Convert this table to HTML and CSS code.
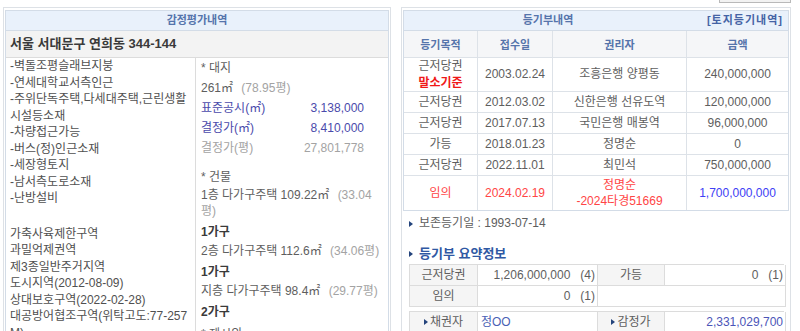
FILE: index.html
```html
<!DOCTYPE html>
<html lang="ko">
<head>
<meta charset="utf-8">
<title>감정평가 / 등기부</title>
<link rel="stylesheet" href="styles.css">
</head>
<body>
<div class="topbar"><div class="btn-sliver"></div></div>
<div class="page">
  <section class="panel panel-left">
    <div class="box">
      <div class="box-head">감정평가내역</div>
      <div class="addr">서울 서대문구 연희동 344-144</div>
      <div class="appr">
        <div class="appr-notes">
          <div class="notes">
            <p>-벽돌조평슬래브지붕</p>
            <p>-연세대학교서측인근</p>
            <p>-주위단독주택,다세대주택,근린생활시설등소재</p>
            <p>-차량접근가능</p>
            <p>-버스(정)인근소재</p>
            <p>-세장형토지</p>
            <p>-남서측도로소재</p>
            <p>-난방설비</p>
          </div>
          <div class="notes notes-zone">
            <p>가축사육제한구역</p>
            <p>과밀억제권역</p>
            <p>제3종일반주거지역</p>
            <p>도시지역(2012-08-09)</p>
            <p>상대보호구역(2022-02-28)</p>
            <p>대공방어협조구역(위탁고도:77-257M)</p>
          </div>
        </div>
        <div class="appr-detail">
          <div class="d-head">* 대지</div>
          <div class="d-line">261㎡ <span class="muted">(78.95평)</span></div>
          <div class="kv kv-blue"><span>표준공시(㎡)</span><span>3,138,000</span></div>
          <div class="kv kv-blue"><span>결정가(㎡)</span><span>8,410,000</span></div>
          <div class="kv kv-gray"><span>결정가(평)</span><span>27,801,778</span></div>
          <div class="d-head d-head-gap">* 건물</div>
          <div class="floor floor-first">1층 다가구주택 109.22㎡ <span class="muted">(33.04평)</span></div>
          <div class="units">1가구</div>
          <div class="floor">2층 다가구주택 112.6㎡ <span class="muted">(34.06평)</span></div>
          <div class="units">1가구</div>
          <div class="floor">지층 다가구주택 98.4㎡ <span class="muted">(29.77평)</span></div>
          <div class="units">2가구</div>
          <div class="d-head d-head-next">* 제시외</div>
        </div>
      </div>
    </div>
  </section>

  <section class="panel panel-right">
    <div class="box">
      <div class="box-head box-head-split">
        <span class="box-title">등기부내역</span>
        <a class="box-link">[토지등기내역]</a>
      </div>
      <div class="reg">
        <div class="th">등기목적</div><div class="th">접수일</div><div class="th">권리자</div><div class="th">금액</div>

        <div class="td">근저당권<br><strong class="red">말소기준</strong></div><div class="td">2003.02.24</div><div class="td">조흥은행 양평동</div><div class="td">240,000,000</div>
        <div class="td">근저당권</div><div class="td">2012.03.02</div><div class="td">신한은행 선유도역</div><div class="td">120,000,000</div>
        <div class="td">근저당권</div><div class="td">2017.07.13</div><div class="td">국민은행 매봉역</div><div class="td">96,000,000</div>
        <div class="td">가등</div><div class="td">2018.01.23</div><div class="td">정명순</div><div class="td">0</div>
        <div class="td">근저당권</div><div class="td">2022.11.01</div><div class="td">최민석</div><div class="td">750,000,000</div>
        <div class="td last hl">임의</div><div class="td last hl">2024.02.19</div><div class="td last hl">정명순<br>-2024타경51669</div><div class="td last amount">1,700,000,000</div>
      </div>
    </div>

    <p class="bullet info">보존등기일 : 1993-07-14</p>
    <h3 class="bullet sub">등기부 요약정보</h3>

    <div class="sum">
      <div class="s-label">근저당권</div><div class="s-val">1,206,000,000<span class="cnt">(4)</span></div>
      <div class="s-label">가등</div><div class="s-val">0<span class="cnt">(1)</span></div>
      <div class="s-label">임의</div><div class="s-val">0<span class="cnt">(1)</span></div>
      <div class="s-val s-wide"></div>
    </div>

    <div class="sum sum2">
      <div class="s-label"><span class="tri"></span>채권자</div><div class="s-val s-left">정OO</div>
      <div class="s-label"><span class="tri"></span>감정가</div><div class="s-val s-blue">2,331,029,700</div>
    </div>
  </section>
</div>
</body>
</html>
```

FILE: styles.css
```css
* { box-sizing: border-box; }
html, body { margin: 0; padding: 0; background: #fff; }
body {
  width: 800px;
  font-family: "Liberation Sans", "Noto Sans CJK KR", sans-serif;
  font-size: 12px;
  color: #5e5e5e;
}
p, h3 { margin: 0; }

.topbar {
  height: 7px;
  display: flex;
  justify-content: flex-end;
  padding-right: 9px;
}
.btn-sliver {
  width: 72px;
  height: 3px;
  border: 1px solid #b9b9b9;
  border-top: 0;
  background: #f2f2f2;
}

.page {
  display: flex;
  align-items: flex-start;
  gap: 10px;
  padding-left: 3px;
}
.panel {
  border: 1px solid #dde1e6;
  padding: 2px 1px;
}
.panel-left { width: 388px; height: 360px; }
.panel-right { width: 390px; height: 360px; }

.box { border: 1px solid #d3dce7; }
.box-head {
  height: 20px;
  line-height: 19px;
  background: #e9f1fb;
  border-bottom: 1px solid #d3dce7;
  text-align: center;
  font-size: 11px;
  font-weight: bold;
  color: #5574ab;
}
.box-head-split { display: flex; }
.box-title { width: 288px; text-align: center; }
.box-link { flex: 1; text-align: right; padding-right: 5px; color: #4463a5; letter-spacing: 1px; }

.addr {
  height: 27px;
  line-height: 26px;
  background: #f3f3f3;
  border-bottom: 1px solid #dcdcdc;
  padding-left: 4px;
  font-size: 13px;
  font-weight: bold;
  color: #3a3a3a;
}

.appr {
  display: grid;
  grid-template-columns: 190px 1fr;
}
.appr-notes {
  border-right: 1px solid #dcdcdc;
  padding-left: 4px;
  word-break: break-all;
  line-height: 16.5px;
  color: #505050;
}
.notes-zone { margin-top: 19px; }

.appr-detail { padding-left: 5px; color: #5e5e5e; }
.d-head { line-height: 20px; }
.d-line { line-height: 20px; }
.d-head-gap { margin-top: 9px; }
.d-head-next { margin-top: 4px; }
.muted { color: #a3a3a3; margin-left: 5px; }
.kv {
  width: 163px;
  display: flex;
  justify-content: space-between;
  line-height: 20px;
}
.kv-blue { color: #4a4aab; }
.kv-gray { color: #a3a3a3; }
.floor { line-height: 16px; margin-top: 3px; padding-right: 6px; }
.floor-first { margin-top: 0; }
.units { line-height: 16px; margin-top: 5px; font-weight: bold; color: #3a3a3a; }

.reg {
  display: grid;
  grid-template-columns: 74px 75px 134px 101px;
}
.th, .td {
  display: flex;
  flex-direction: column;
  align-items: center;
  justify-content: center;
  text-align: center;
  border-right: 1px solid #dde2e8;
  border-bottom: 1px solid #dde2e8;
}
.th:nth-child(4n), .td:nth-child(4n) { border-right: 0; }
.th {
  height: 27px;
  background: #f5f6f8;
  font-size: 11px;
  font-weight: bold;
  color: #5574ab;
}
.td { min-height: 21px; line-height: 16.5px; }
.td.last { border-bottom: 0; min-height: 34px; }
.red { color: #f01818; }
.hl { color: #ff4545; }
.amount { color: #4040f5; }

.bullet {
  margin: 0 5px 0 6px;
  display: flex;
  align-items: center;
}
.bullet::before {
  content: "";
  width: 0;
  height: 0;
  border-left: 4px solid #24447c;
  border-top: 3px solid transparent;
  border-bottom: 3px solid transparent;
  margin-right: 6px;
}
.info { margin-top: 4px; line-height: 17px; }
.sub {
  margin-top: 12px;
  line-height: 19px;
  font-size: 13px;
  font-weight: bold;
  color: #2f58a3;
}

.sum {
  margin: 1px 5px 0 6px;
  display: grid;
  grid-template-columns: 68px 120px 67px 121px;
  border-left: 1px solid #dcdcdc;
  border-top: 1px solid #dcdcdc;
}
.sum2 { margin-top: 4px; }
.s-label, .s-val {
  border-right: 1px solid #dcdcdc;
  border-bottom: 1px solid #dcdcdc;
  min-height: 21px;
  line-height: 20px;
}
.s-label {
  background: #f5f5f5;
  text-align: center;
  display: flex;
  align-items: center;
  justify-content: center;
}
.s-val { text-align: right; padding-right: 2px; }
.s-wide { grid-column: span 2; }
.s-left { text-align: left; padding-left: 3px; color: #4a5fb5; }
.s-blue { color: #4b55b8; }
.cnt { margin-left: 10px; }
.tri {
  width: 0;
  height: 0;
  border-left: 4px solid #24447c;
  border-top: 3px solid transparent;
  border-bottom: 3px solid transparent;
  margin-right: 2px;
}
```
